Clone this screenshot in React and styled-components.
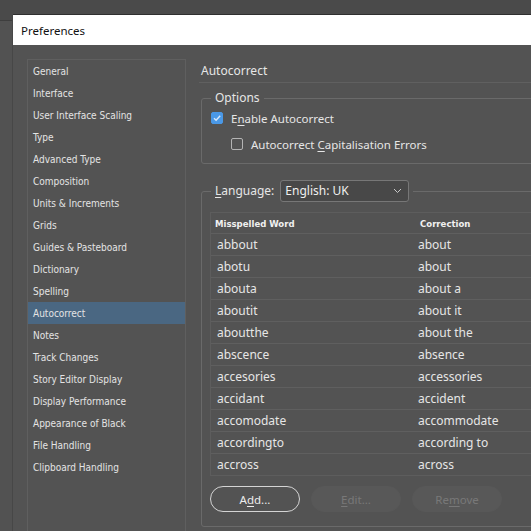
import React from 'react';
import styled, { createGlobalStyle } from 'styled-components';

const GlobalStyle = createGlobalStyle`
  html, body {
    margin: 0;
    padding: 0;
    background: #4f4f4f;
  }
`;

const sections = [
  'General',
  'Interface',
  'User Interface Scaling',
  'Type',
  'Advanced Type',
  'Composition',
  'Units & Increments',
  'Grids',
  'Guides & Pasteboard',
  'Dictionary',
  'Spelling',
  'Autocorrect',
  'Notes',
  'Track Changes',
  'Story Editor Display',
  'Display Performance',
  'Appearance of Black',
  'File Handling',
  'Clipboard Handling',
];

const words = [
  ['abbout', 'about'],
  ['abotu', 'about'],
  ['abouta', 'about a'],
  ['aboutit', 'about it'],
  ['aboutthe', 'about the'],
  ['abscence', 'absence'],
  ['accesories', 'accessories'],
  ['accidant', 'accident'],
  ['accomodate', 'accommodate'],
  ['accordingto', 'according to'],
  ['accross', 'across'],
];

class App extends React.Component {
  render() {
    return (
      <Page>
        <GlobalStyle />
        <Window>
          <TitleBar>Preferences</TitleBar>
          <Body>
            <Sidebar>
              {sections.map(name => (
                <SidebarItem key={name} selected={name === 'Autocorrect'}>
                  {name}
                </SidebarItem>
              ))}
            </Sidebar>
            <Content>
              <Heading>Autocorrect</Heading>
              <Group>
                <Legend>Options</Legend>
                <CheckRow>
                  <Checkbox checked>
                    <svg width="10" height="10" viewBox="0 0 10 10">
                      <path d="M2 5.2 L4.1 7.3 L8.2 2.8" fill="none" stroke="#d9e9fb" strokeWidth="1.4" />
                    </svg>
                  </Checkbox>
                  <span>E<u>n</u>able Autocorrect</span>
                </CheckRow>
                <CheckRow indent>
                  <Checkbox />
                  <span>Autocorrect <u>C</u>apitalisation Errors</span>
                </CheckRow>
              </Group>
              <Group spaced bottom={14}>
                <Legend tall>
                  <LegendInner>
                    <span><u>L</u>anguage:</span>
                    <Select>
                      <span>English: UK</span>
                      <svg width="9" height="6" viewBox="0 0 9 6">
                        <path d="M1 1 L4.5 4.5 L8 1" fill="none" stroke="#c8c8c8" strokeWidth="1" />
                      </svg>
                    </Select>
                  </LegendInner>
                </Legend>
                <Table>
                  <HeaderRow>
                    <HeaderCell>Misspelled Word</HeaderCell>
                    <HeaderCell second>Correction</HeaderCell>
                  </HeaderRow>
                  {words.map(([wrong, right]) => (
                    <Row key={wrong}>
                      <Cell>{wrong}</Cell>
                      <Cell>{right}</Cell>
                    </Row>
                  ))}
                </Table>
                <Buttons>
                  <Button>A<u>d</u>d...</Button>
                  <Button disabled><u>E</u>dit...</Button>
                  <Button disabled>Re<u>m</u>ove</Button>
                </Buttons>
              </Group>
            </Content>
          </Body>
        </Window>
      </Page>
    );
  }
}

const Page = styled.div`
  width: 531px;
  height: 531px;
  overflow: hidden;
  padding: 15px 0 0 13px;
  box-sizing: border-box;
  background: linear-gradient(#4a4a4a 0, #4a4a4a 20px, #3e3e3e 20px, #3e3e3e 21px, #525252 21px);
`;

const Window = styled.div`
  width: 680px;
  height: 560px;
  background: #535353;
  box-shadow: 0 -1px 0 #2f2f2f, -1px 0 0 #474747;
  display: flex;
  flex-direction: column;
`;

const TitleBar = styled.div`
  height: 30px;
  flex: none;
  background: #ffffff;
  color: #111;
  font-family: "Noto Sans", "Open Sans", sans-serif;
  font-size: 11.5px;
  display: flex;
  align-items: center;
  padding-left: 8px;
`;

const Body = styled.div`
  flex: 1;
  display: flex;
  gap: 13px;
  padding: 14px 0 0 14px;
`;

const Sidebar = styled.div`
  width: 157px;
  flex: none;
  border: 1px solid #5f5f5f;
  font-family: "DejaVu Sans Condensed", "DejaVu Sans", sans-serif;
  font-stretch: condensed;
  font-size: 10px;
`;

const SidebarItem = styled.div`
  height: 22px;
  display: flex;
  align-items: center;
  padding-left: 5px;
  color: #e4e4e4;
  background: ${props => (props.selected ? '#4a6782' : 'transparent')};
`;

const Content = styled.div`
  flex: 1;
  display: flex;
  flex-direction: column;
  font-family: "Noto Sans", "Open Sans", sans-serif;
  font-size: 11.5px;
  color: #e6e6e6;

  u {
    text-decoration-thickness: 1px;
    text-underline-offset: 2px;
  }
`;

const Heading = styled.div`
  height: 23px;
  display: flex;
  align-items: center;
  padding-left: 2px;
  border-bottom: 1px solid #606060;
  font-size: 12px;
`;

const Group = styled.fieldset`
  margin: ${props => (props.spaced ? '16px' : '7px')} 0 0 2px;
  padding: 0 0 ${props => props.bottom || 9}px 9px;
  border: 1px solid #6a6a6a;
  border-radius: 3px;
  min-width: 0;
`;

const Legend = styled.legend`
  padding: 0 4px;
  height: ${props => (props.tall ? '22px' : '16px')};
  line-height: 16px;
  font-size: 12px;
`;

const LegendInner = styled.div`
  display: flex;
  align-items: center;
  gap: 6px;
  height: 22px;
`;

const Select = styled.div`
  width: 129px;
  height: 22px;
  box-sizing: border-box;
  border: 1px solid #777;
  border-radius: 3px;
  background: #484848;
  display: flex;
  align-items: center;
  justify-content: space-between;
  padding: 0 6px 0 4px;
  color: #efefef;
`;

const CheckRow = styled.div`
  display: flex;
  align-items: center;
  gap: 8px;
  height: 20px;
  margin-top: ${props => (props.indent ? '6px' : '2px')};
  padding-left: ${props => (props.indent ? '20px' : '0')};
`;

const Checkbox = styled.span`
  width: 12px;
  height: 12px;
  box-sizing: border-box;
  border-radius: 2px;
  flex: none;
  display: flex;
  align-items: center;
  justify-content: center;
  border: 1px solid ${props => (props.checked ? '#4a98e6' : '#b4b4b4')};
  background: ${props => (props.checked ? '#4a98e6' : 'transparent')};
`;

const Table = styled.div`
  margin-top: 10px;
  border: 1px solid #5d5d5d;
  border-right: none;
  margin-left: -1px;
`;

const HeaderRow = styled.div`
  display: grid;
  grid-template-columns: 206px 1fr;
  height: 20px;
  align-items: center;
  border-bottom: 1px solid #5f5f5f;
  font-family: "DejaVu Sans Condensed", "DejaVu Sans", sans-serif;
  font-stretch: condensed;
  font-weight: bold;
  font-size: 9.5px;
  color: #f0f0f0;
`;

const HeaderCell = styled.div`
  padding-left: ${props => (props.second ? '3px' : '4px')};
`;

const Row = styled.div`
  display: grid;
  grid-template-columns: 206px 1fr;
  height: 21px;
  align-items: center;
  border-bottom: 1px solid #5f5f5f;

  &:last-child {
    border-bottom: none;
  }
`;

const Cell = styled.div`
  padding-left: 6px;
  font-size: 12px;
  &:last-child {
    padding-left: 1px;
  }
`;

const Buttons = styled.div`
  display: flex;
  gap: 11px;
  margin-top: 10px;
  margin-left: -1px;
`;

const Button = styled.button`
  width: 90px;
  height: 26px;
  border-radius: 13px;
  font-family: "Noto Sans", "Open Sans", sans-serif;
  font-size: 11.5px;
  color: ${props => (props.disabled ? '#787878' : '#ececec')};
  background: ${props => (props.disabled ? '#585858' : 'transparent')};
  border: 1px solid ${props => (props.disabled ? '#585858' : '#d4d4d4')};
  padding: 0;
  cursor: ${props => (props.disabled ? 'default' : 'pointer')};

  u {
    text-underline-offset: 2px;
  }
`;

export default App;
